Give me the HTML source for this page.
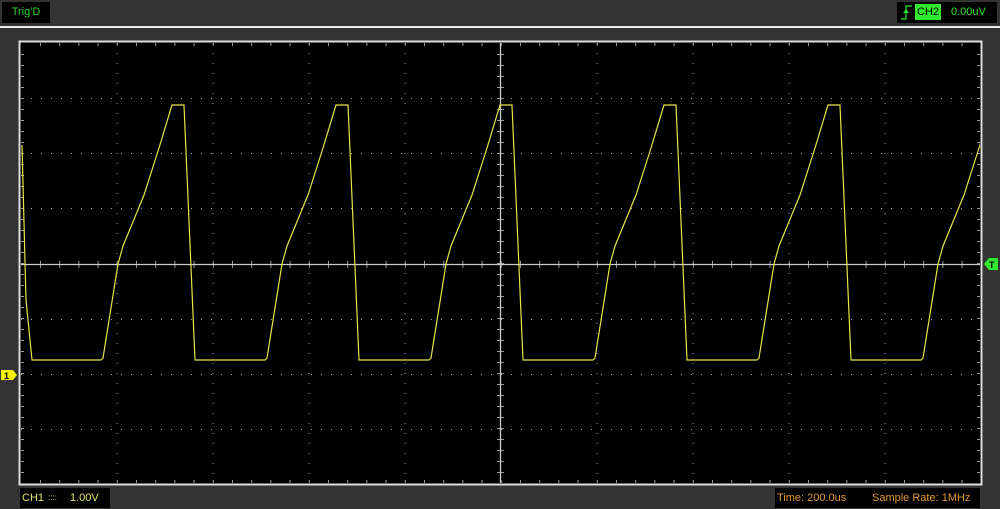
<!DOCTYPE html>
<html><head><style>
html,body{margin:0;padding:0}
body{width:1000px;height:509px;background:#333;position:relative;overflow:hidden;font-family:"Liberation Sans",sans-serif;font-size:11px}
.b{position:absolute;background:#000;line-height:20px}
</style></head><body>
<div class="b" style="left:2px;top:2px;width:48px;height:21px;color:#2fd22f;text-align:center">Trig'D</div>
<div class="b" style="left:897px;top:2px;width:100px;height:21px;color:#2fe82f">
<svg style="position:absolute;left:3px;top:2px" width="14" height="17"><path d="M1 15H6V2H12" stroke="#2fe82f" fill="none" stroke-width="1.2"/><path d="M3 9L6 5L9 9Z" fill="#2fe82f"/></svg>
<span style="position:absolute;left:18px;top:2px;height:16px;line-height:16px;background:#2fe82f;color:#000;padding:0 2px">CH2</span>
<span style="position:absolute;left:54px;top:0">0.00uV</span></div>
<div style="position:absolute;left:0;top:26px;width:1000px;height:2px;background:#eee"></div>
<svg style="position:absolute;left:0;top:0" width="1000" height="509">
<rect x="19.5" y="41.5" width="962" height="443" fill="#000" stroke="#ddd" stroke-width="2"/>
<g stroke="#aaa" stroke-width="1" stroke-dasharray="1,9">
<path d="M117 43V483M213 43V483M309 43V483M405 43V483M597 43V483M693 43V483M789 43V483M885 43V483"/>
<path d="M21 98.5H980M21 153.5H980M21 208.5H980M21 319.5H980M21 374.5H980M21 429.5H980"/>
</g>
<g stroke="#999" stroke-width="1">
<path d="M40 44.5H980M40 481.5H980" stroke-width="3" stroke-dasharray="1,18.2"/>
<path d="M40 264.5H980" stroke-width="7" stroke-dasharray="1,18.2"/>
<path d="M22.5 54V483M978.5 54V483" stroke-width="3" stroke-dasharray="1,10"/>
<path d="M500.5 54V483" stroke-width="7" stroke-dasharray="1,10"/>
</g>
<path d="M21 264.5H980M500.5 43V483" stroke="#ccc" stroke-width="1.3"/>
<clipPath id="c"><rect x="21" y="43" width="959" height="440"/></clipPath>
<path clip-path="url(#c)" fill="none" stroke="#e6e64a" stroke-width="1.2" d="M22 145L26 300L32 360H101
l2 -2l15 -94l5 -18l21 -51l15 -47l13 -43h12l11 255h70
l2 -2l15 -94l5 -18l21 -51l15 -47l13 -43h12l11 255h70
l2 -2l15 -94l5 -18l21 -51l15 -47l13 -43h12l11 255h70
l2 -2l15 -94l5 -18l21 -51l15 -47l13 -43h12l11 255h70
l2 -2l15 -94l5 -18l21 -51l15 -47l13 -43h12l11 255h70
l2 -2l15 -94l5 -18l21 -51l15 -47l13 -43"/>
<path d="M1 370H13L17 375L13 380H1Z" fill="#f0f000"/><text x="4" y="379" font-size="9" font-weight="bold" fill="#000" font-family="Liberation Sans">1</text>
<path d="M998 258H989L984 264L989 270H998Z" fill="#2fe82f"/><text x="989" y="268" font-size="9" font-weight="bold" fill="#000" font-family="Liberation Sans">T</text>
</svg>
<div class="b" style="left:20px;top:488px;width:90px;height:20px;color:#e6e66a"><span style="position:absolute;left:2px">CH1</span><span style="position:absolute;left:28px;font-size:8px">::::</span><span style="position:absolute;left:50px">1.00V</span></div>
<div class="b" style="left:775px;top:488px;width:205px;height:20px;color:#e0962f"><span style="position:absolute;left:2px">Time: 200.0us</span><span style="position:absolute;left:97px">Sample Rate: 1MHz</span></div>
</body></html>
